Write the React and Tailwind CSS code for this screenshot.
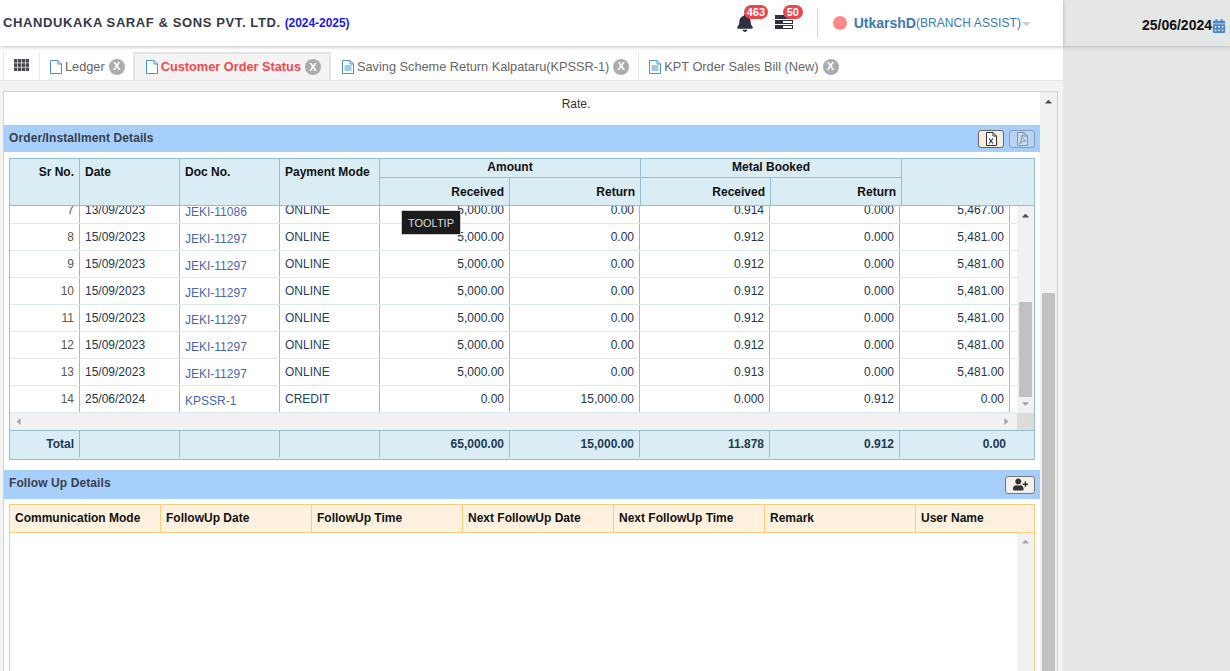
import React from "react";
import { FaBell, FaUserPlus, FaCaretDown, FaCaretUp, FaCaretLeft, FaCaretRight, FaCalendarAlt } from "react-icons/fa";

const rows = [
  ["7", "13/09/2023", "JEKI-11086", "ONLINE", "5,000.00", "0.00", "0.914", "0.000", "5,467.00"],
  ["8", "15/09/2023", "JEKI-11297", "ONLINE", "5,000.00", "0.00", "0.912", "0.000", "5,481.00"],
  ["9", "15/09/2023", "JEKI-11297", "ONLINE", "5,000.00", "0.00", "0.912", "0.000", "5,481.00"],
  ["10", "15/09/2023", "JEKI-11297", "ONLINE", "5,000.00", "0.00", "0.912", "0.000", "5,481.00"],
  ["11", "15/09/2023", "JEKI-11297", "ONLINE", "5,000.00", "0.00", "0.912", "0.000", "5,481.00"],
  ["12", "15/09/2023", "JEKI-11297", "ONLINE", "5,000.00", "0.00", "0.912", "0.000", "5,481.00"],
  ["13", "15/09/2023", "JEKI-11297", "ONLINE", "5,000.00", "0.00", "0.913", "0.000", "5,481.00"],
  ["14", "25/06/2024", "KPSSR-1", "CREDIT", "0.00", "15,000.00", "0.000", "0.912", "0.00"],
];

function PageIcon({ lines }) {
  return (
    <svg width="12" height="14" viewBox="0 0 12 14" fill="none" className="shrink-0">
      <path d="M.5.5h7.500l3.500 3.500v9.500h-11z" fill="#ffffff" stroke="#4a8fce" />
      <path d="M8 .5v3.500h3.500" stroke="#4a8fce" />
      {lines && <path d="M2.500 6h7M2.500 8h7M2.500 10h7" stroke="#4a8fce" />}
    </svg>
  );
}

function GridIcon() {
  const xs = [0, 4, 8, 12];
  const ys = [0, 4.25, 8.5];
  return (
    <svg width="15" height="12" viewBox="0 0 15 12" className="mb-[3px]">
      {ys.map((y) => xs.map((x) => <rect key={`${x}-${y}`} x={x} y={y} width="3.4" height="3.6" fill="#4a4a55" />))}
    </svg>
  );
}

function Tab({ label, active, doc, extra }) {
  return (
    <div className={`flex h-[28px] items-center text-[12.75px] ${extra} ${active ? "border-x-2 border-t-2 border-[#e4e4e4] bg-[#f3f3f3] font-bold text-[#f0484e]" : "pt-[1px] text-[#666666]"}`}>
      <PageIcon lines={doc} />
      <span className="ml-[3px] mr-[4px] whitespace-nowrap">{label}</span>
      <span className="flex size-[16px] shrink-0 items-center justify-center rounded-full bg-[#a9adb0] text-[11px] font-bold text-white">X</span>
    </div>
  );
}

function SectionBar({ title, h, titleShift, children }) {
  return (
    <div className={`flex items-center justify-between bg-[#a6cffc] pl-[5px] pr-[5px] ${h}`}>
      <span className={`text-[12px] font-bold tracking-[0.1px] text-[#3a3f4b] ${titleShift}`}>{title}</span>
      <div className="flex gap-[5px]">{children}</div>
    </div>
  );
}

function DocBtn({ label, dim }) {
  return (
    <div className={`flex h-[18px] w-[26px] items-center justify-center rounded-[3px] border ${dim ? "border-[#8a9cb0] bg-[#b9d4f2]" : "border-[#666666] bg-[#f5efe2]"}`}>
      <svg width="11" height="14" viewBox="0 0 11 14" fill="none">
        <path d="M.5.5h6.500l3.500 3.500v9.500h-10z" fill={dim ? "#c8dcf2" : "#ffffff"} stroke={dim ? "#7d93ad" : "#333333"} />
        <path d="M7 .5v3.500h3.500" stroke={dim ? "#7d93ad" : "#333333"} />
        {label === "x" ? (
          <path d="M3 6.500l4 5M7 6.500l-4 5" stroke="#333333" strokeWidth="1.2" />
        ) : (
          <path d="M5 3c1 4 2 5 4 6-3 0-5 1-6 3 1-3 2-6 2-9z" stroke="#7d93ad" />
        )}
      </svg>
    </div>
  );
}

function HeadCell({ w, align = "left", children, extra = "" }) {
  return (
    <div className={`${w} shrink-0 border-r border-[#94bfd0] px-[5px] text-[12px] font-bold text-[#111111] ${align === "right" ? "text-right" : "text-left"} ${extra}`}>
      {children}
    </div>
  );
}

function Row({ r, clipped }) {
  const cell = "shrink-0 border-r border-[#94bfd0] px-[5px] h-full flex items-center";
  return (
    <div className={`flex h-[27px] border-b border-[#dcebf2] text-[12px] text-[#24364a] ${clipped ? "-mt-[9px]" : ""}`}>
      <div className={`${cell} w-[70px] justify-end text-[#5c5a48]`}>{r[0]}</div>
      <div className={`${cell} w-[100px]`}>{r[1]}</div>
      <div className={`${cell} w-[100px] pt-[4px] text-[#4a66ae]`}>{r[2]}</div>
      <div className={`${cell} w-[100px] text-[#1f3f66]`}>{r[3]}</div>
      <div className={`${cell} w-[130px] justify-end`}>{r[4]}</div>
      <div className={`${cell} w-[130px] justify-end`}>{r[5]}</div>
      <div className={`${cell} w-[130px] justify-end`}>{r[6]}</div>
      <div className={`${cell} w-[130px] justify-end`}>{r[7]}</div>
      <div className={`${cell} w-[110px] justify-end`}>{r[8]}</div>
    </div>
  );
}

function TotalCell({ w, children }) {
  return (
    <div className={`${w} flex h-[26px] shrink-0 items-center justify-end border-r border-[#94bfd0] px-[5px] text-[12px] font-bold text-[#1d3b55]`}>
      {children}
    </div>
  );
}

export default function App() {
  return (
    <div className="flex h-[671px] w-[1230px] overflow-hidden bg-[#e5e6e8] font-['Liberation_Sans',Arial,sans-serif]">
      <div className="flex w-[1063px] shrink-0 flex-col bg-[#f3f3f3]">
        {/* header */}
        <header className="relative z-10 flex h-[46px] shrink-0 items-center justify-between bg-white pl-[3px] shadow-[0_1px_4px_rgba(0,0,0,0.25)]">
          <div className="flex items-baseline gap-[4px]">
            <span className="text-[13px] font-bold tracking-[0.6px] text-[#333a4a]">CHANDUKAKA SARAF &amp; SONS PVT. LTD.</span>
            <span className="text-[12px] font-bold tracking-[-0.05px] text-[#1a1ae6]">(2024-2025)</span>
          </div>
          <div className="flex items-center pr-[30px]">
            <div className="relative mr-[21px]">
              <FaBell size={18} className="text-[#2d3142]" />
              <span className="absolute -top-[9px] left-[8px] rounded-full bg-[#e8474c] px-[3px] text-[11px] font-bold leading-[14px] text-white">463</span>
            </div>
            <div className="relative mr-[24px] -mt-[2px] flex w-[18px] flex-col gap-[1px]">
              <div className="h-[4px] bg-[#2d3142]" />
              <div className="flex h-[4px] items-center justify-end bg-[#2d3142] pr-[1px]"><div className="h-[2px] w-[9px] bg-white" /></div>
              <div className="flex h-[4px] items-center justify-end bg-[#2d3142] pr-[1px]"><div className="h-[2px] w-[9px] bg-white" /></div>
              <span className="absolute -top-[10px] left-[8px] rounded-full bg-[#e8474c] px-[4px] text-[11px] font-bold leading-[14px] text-white">50</span>
            </div>
            <div className="mr-[15px] h-[30px] w-px bg-[#d5d5d5]" />
            <div className="mr-[7px] size-[14px] rounded-full bg-[#ff8a8a]" />
            <span className="text-[14px] font-bold text-[#3a7ab5]">UtkarshD</span>
            <span className="text-[12px] tracking-[0.07px] text-[#3a7ab5]">(BRANCH ASSIST)</span>
            <FaCaretDown size={13} className="-ml-[1px] text-[#cccccc]" />
          </div>
        </header>

        {/* tabs */}
        <nav className="flex h-[35px] shrink-0 items-start border-b border-[#e4e4e4] bg-white pl-[3px] pt-[6px]">
          <div className="flex h-[28px] w-[37px] items-center justify-center border-x border-[#e8e8e8]">
            <GridIcon />
          </div>
          <Tab label="Ledger" extra="pl-[10px] pr-[8px]" />
          <Tab label="Customer Order Status" active extra="pl-[11px] pr-[8px]" />
          <Tab label="Saving Scheme Return Kalpataru(KPSSR-1)" doc extra="pl-[11px] pr-[9px] border-r border-[#e8e8e8]" />
          <Tab label="KPT Order Sales Bill (New)" doc extra="pl-[10px]" />
        </nav>

        {/* content */}
        <main className="min-h-0 flex-1 pl-[3px] pr-[5px] pt-[10px]">
          <div className="flex h-full border border-b-0 border-[#cfd2d2] bg-white">
            <div className="min-w-0 flex-1">
              <div className="flex h-[33px] items-start justify-center pl-[108px] pt-[3px] text-[12px] text-[#333333]">Rate.</div>
              <SectionBar title="Order/Installment Details" h="h-[27px]" titleShift="-mt-[2px]">
                <DocBtn label="x" />
                <DocBtn label="p" dim />
              </SectionBar>

              {/* installment table */}
              <div className="relative ml-[5px] mr-[5px] mt-[6px] border border-[#94bfd0]">
                <div className="flex h-[47px] border-b border-[#94bfd0] bg-[#daecf4]">
                  <HeadCell w="w-[70px]" align="right" extra="pt-[4px]">Sr No.</HeadCell>
                  <HeadCell w="w-[100px]" extra="pt-[4px]">Date</HeadCell>
                  <HeadCell w="w-[100px]" extra="pt-[4px]">Doc No.</HeadCell>
                  <HeadCell w="w-[100px]" extra="pt-[4px]">Payment Mode</HeadCell>
                  <div className="w-[261px] shrink-0 border-r border-[#94bfd0]">
                    <div className="h-[19px] border-b border-[#94bfd0] text-center text-[12px] font-bold leading-[16px] text-[#111111]">Amount</div>
                    <div className="flex h-[27px]">
                      <HeadCell w="w-[130px]" align="right" extra="pt-[5px]">Received</HeadCell>
                      <div className="flex-1 px-[5px] pt-[5px] text-right text-[12px] font-bold text-[#111111]">Return</div>
                    </div>
                  </div>
                  <div className="w-[261px] shrink-0 border-r border-[#94bfd0]">
                    <div className="h-[19px] border-b border-[#94bfd0] text-center text-[12px] font-bold leading-[16px] text-[#111111]">Metal Booked</div>
                    <div className="flex h-[27px]">
                      <HeadCell w="w-[130px]" align="right" extra="pt-[5px]">Received</HeadCell>
                      <div className="flex-1 px-[5px] pt-[5px] text-right text-[12px] font-bold text-[#111111]">Return</div>
                    </div>
                  </div>
                  <div className="flex-1" />
                </div>

                <div className="flex h-[207px]">
                  <div className="min-w-0 flex-1 overflow-hidden">
                    {rows.map((r, i) => <Row key={r[0]} r={r} clipped={i === 0} />)}
                  </div>
                  <div className="flex w-[17px] shrink-0 flex-col items-center justify-between bg-[#f1f1f1]">
                    <FaCaretUp size={11} className="mt-[4px] text-[#505050]" />
                    <div className="mt-[80px] h-[95px] w-[13px] bg-[#c1c1c1]" />
                    <FaCaretDown size={11} className="mb-[4px] text-[#a3a3a3]" />
                  </div>
                </div>

                <div className="flex h-[17px] items-center justify-between bg-[#f1f1f1]">
                  <FaCaretLeft size={11} className="ml-[3px] text-[#a3a3a3]" />
                  <div className="flex h-full items-center">
                    <FaCaretRight size={11} className="mr-[5px] text-[#a3a3a3]" />
                    <div className="h-full w-[17px] bg-[#dcdcdc]" />
                  </div>
                </div>

                <div className="flex h-[29px] border-t border-[#94bfd0] bg-[#daecf4]">
                  <TotalCell w="w-[70px]">Total</TotalCell>
                  <TotalCell w="w-[100px]" />
                  <TotalCell w="w-[100px]" />
                  <TotalCell w="w-[100px]" />
                  <TotalCell w="w-[130px]">65,000.00</TotalCell>
                  <TotalCell w="w-[130px]">15,000.00</TotalCell>
                  <TotalCell w="w-[130px]">11.878</TotalCell>
                  <TotalCell w="w-[130px]">0.912</TotalCell>
                  <div className="flex h-[26px] w-[106px] items-center justify-end text-[12px] font-bold text-[#1d3b55]">0.00</div>
                </div>

                {/* tooltip */}
                <div className="absolute left-[391px] top-[51px] flex h-[25px] w-[60px] items-center justify-center border border-[#cccccc] bg-[#1c1c1c] pt-[1px] text-[11px] text-[#dddddd]">TOOLTIP</div>
              </div>

              <div className="mt-[10px]">
                <SectionBar title="Follow Up Details" h="h-[29px]" titleShift="-mt-[4px]">
                  <div className="flex h-[18px] w-[30px] items-center justify-center rounded-[3px] border border-[#777777] bg-[#f3f0ea]">
                    <FaUserPlus size={15} className="text-[#333333]" />
                  </div>
                </SectionBar>
              </div>

              {/* follow up table */}
              <div className="ml-[5px] mr-[5px] mt-[5px] flex h-[200px] flex-col border-x border-t border-[#fdcd7f]">
                <div className="flex h-[28px] shrink-0 items-center border-b border-[#fdcd7f] bg-[#fff1df] text-[12px] font-bold text-[#111111]">
                  {["Communication Mode", "FollowUp Date", "FollowUp Time", "Next FollowUp Date", "Next FollowUp Time", "Remark"].map((h) => (
                    <div key={h} className="flex h-full w-[151px] shrink-0 items-center border-r border-[#fdcd7f] pb-[1px] pl-[5px]">{h}</div>
                  ))}
                  <div className="pb-[1px] pl-[5px]">User Name</div>
                </div>
                <div className="flex flex-1 justify-end">
                  <div className="flex w-[17px] justify-center bg-[#f1f1f1] pt-[3px]">
                    <FaCaretUp size={11} className="text-[#a3a3a3]" />
                  </div>
                </div>
              </div>
            </div>

            {/* outer scrollbar */}
            <div className="flex w-[17px] shrink-0 flex-col items-center bg-[#f1f1f1]">
              <FaCaretUp size={11} className="mt-[4px] text-[#505050]" />
              <div className="mt-[186px] w-[13px] flex-1 bg-[#c1c1c1]" />
            </div>
          </div>
        </main>
      </div>

      {/* right side */}
      <aside className="relative flex h-[46px] flex-1 items-center justify-end pt-[5px] shadow-[0_1px_4px_rgba(0,0,0,0.2)]">
        <span className="text-[14px] font-bold text-[#111111]">25/06/2024</span>
        <FaCalendarAlt size={14} className="mr-[4px] text-[#4a86c5]" />
      </aside>
    </div>
  );
}
